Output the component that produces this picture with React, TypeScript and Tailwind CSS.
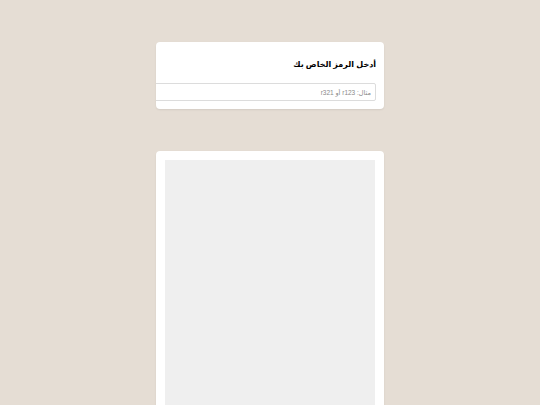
export default function App() {
  return (
    <div
      dir="rtl"
      className="h-[405px] bg-[#e5ddd4] pt-[42px] flex flex-col items-center gap-[42px] overflow-hidden"
      style={{ fontFamily: '"Liberation Sans", "DejaVu Sans", sans-serif' }}
    >
      <div className="w-[228px] shrink-0 bg-white rounded-[4px] shadow-[0_1px_2px_rgba(0,0,0,0.08)] overflow-hidden pt-[17px] pr-[8px] pb-[8px]">
        <h2 className="text-[8px] font-bold text-black leading-[11px] mb-[13px]">أدخل الرمز الخاص بك</h2>
        <input
          type="text"
          placeholder="مثال: r123 أو r321"
          className="block w-[226px] h-[18px] border border-[#dcdcdc] rounded-[2px] px-[4px] text-[6.5px] text-[#555] placeholder:text-[#8a8a8a] outline-none"
        />
      </div>
      <div className="w-[228px] bg-white rounded-[4px] shadow-[0_1px_2px_rgba(0,0,0,0.08)] p-[9px] pb-0 h-[300px] shrink-0">
        <div className="w-full h-full bg-[#efefef]" />
      </div>
    </div>
  );
}
